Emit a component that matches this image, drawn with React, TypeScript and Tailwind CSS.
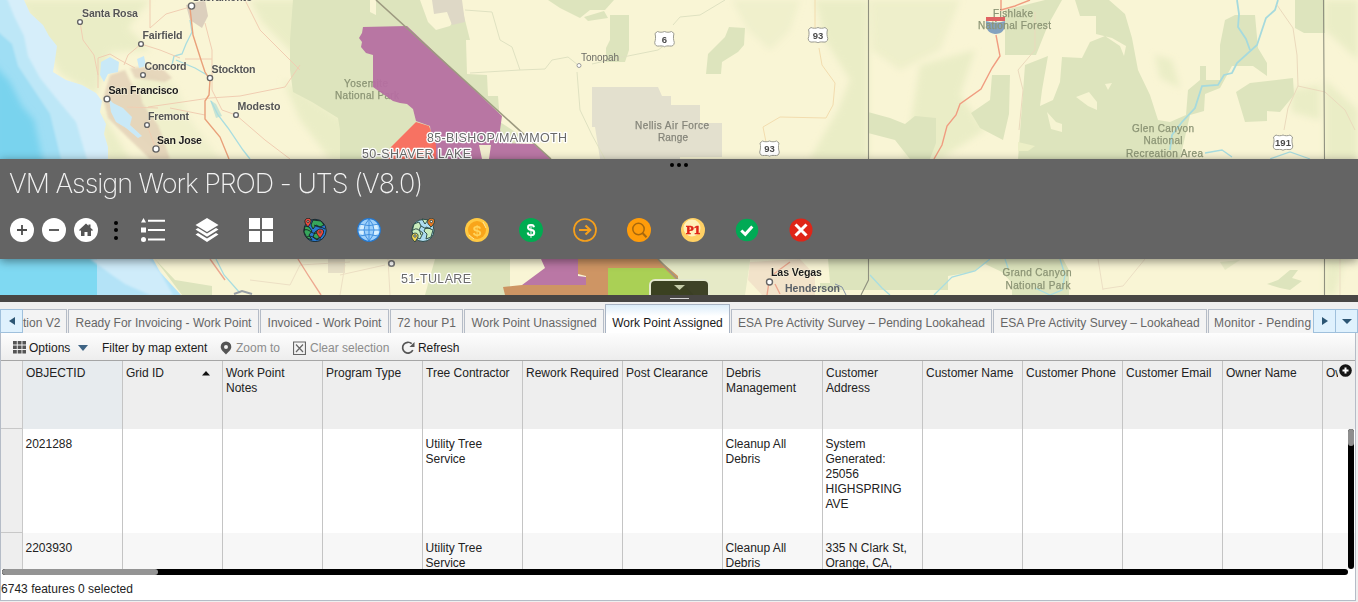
import React from "react";

type Pt = [number, number];

const cities: { x: number; y: number; r: number; t: string; tx: number; ty: number; w: number; c: string }[] = [
  { x: 80, y: 22, r: 2.4, t: "Santa Rosa", tx: 82, ty: 17, w: 56, c: "#555" },
  { x: 141, y: 44, r: 2.4, t: "Fairfield", tx: 142.5, ty: 38.5, w: 40, c: "#555" },
  { x: 143, y: 75, r: 2.4, t: "Concord", tx: 144.5, ty: 69.5, w: 42, c: "#555" },
  { x: 210, y: 78, r: 2.6, t: "Stockton", tx: 211.5, ty: 73, w: 44, c: "#555" },
  { x: 107, y: 99, r: 2.9, t: "San Francisco", tx: 108.5, ty: 93.5, w: 70, c: "#1c1c1c" },
  { x: 236, y: 115, r: 2.4, t: "Modesto", tx: 237.5, ty: 109.5, w: 43, c: "#555" },
  { x: 147, y: 125, r: 2.4, t: "Fremont", tx: 148, ty: 119.5, w: 41, c: "#555" },
  { x: 156, y: 149, r: 3.1, t: "San Jose", tx: 157, ty: 144, w: 45, c: "#1c1c1c" },
  { x: 191.5, y: 6, r: 3.1, t: "Sacramento", tx: 192.5, ty: 1.2, w: 60, c: "#555" },
  { x: 769.5, y: 282, r: 3, t: "Las Vegas", tx: 771, ty: 276, w: 51, c: "#1c1c1c" },
];

const parks: { t: string; x: number; y: number; w: number; c?: string }[] = [
  { t: "Yosemite", x: 344, y: 87, w: 44 },
  { t: "National Park", x: 335, y: 99, w: 64 },
  { t: "Nellis Air Force", x: 635, y: 129, w: 74, c: "#85857a" },
  { t: "Range", x: 658, y: 141, w: 30, c: "#85857a" },
  { t: "Fishlake", x: 993, y: 17, w: 40 },
  { t: "Glen Canyon", x: 1132, y: 132, w: 62 },
  { t: "National", x: 1143.5, y: 144, w: 39 },
  { t: "Recreation Area", x: 1126, y: 156.5, w: 77 },
  { t: "Grand Canyon", x: 1002.5, y: 276, w: 69 },
  { t: "National Park", x: 1005.5, y: 288.5, w: 65 },
];

const zones: { t: string; x: number; y: number; w: number }[] = [
  { t: "85-BISHOP/MAMMOTH", x: 427, y: 142, w: 140 },
  { t: "50-SHAVER LAKE", x: 362, y: 158, w: 109 },
  { t: "51-TULARE", x: 401, y: 283, w: 70 },
];

function Shield({ at, n }: { at: Pt; n: string }) {
  return (
    <g transform={`translate(${at[0]} ${at[1]})`}>
      <path
        d="M-7-7.5C-5-6.500-2-6.500 0-7.500C2-6.500 5-6.500 7-7.500L9.500-5.500C8.500-2 9 1 9.800 3.500C9.500 6.500 8 7.500 5 7C3 6.800 1 7 0 7.800C-1 7-3 6.800-5 7C-8 7.500-9.500 6.500-9.800 3.500C-9 1-8.500-2-9.500-5.500Z"
        fill="#fff"
        stroke="#9a9a90"
        strokeWidth="1"
      />
      <text y="3.6" textAnchor="middle" fontSize="9.5" fontWeight="700" fill="#4a4a4a">
        {n}
      </text>
    </g>
  );
}

function MapCanvas() {
  return (
    <svg width="1358" height="295" viewBox="0 0 1358 295" className="block" fontFamily="'Liberation Sans', Arial, sans-serif">
      <defs>
        <filter id="soft" x="-20%" y="-20%" width="140%" height="140%">
          <feGaussianBlur stdDeviation="3" />
        </filter>
        <filter id="shoal" x="-20%" y="-20%" width="140%" height="140%">
          <feGaussianBlur stdDeviation="1.2" />
        </filter>
      </defs>
      <rect width="1358" height="295" fill="#f9f5d5" />

      {/* farm valley and rolling hills */}
      <g fill="#eaedc6" filter="url(#soft)">
        <path d="M20 0H150L128 28L150 50L110 52L96 95L60 74Z" />
        <path d="M104 105L160 159H220L190 120L175 85L150 70Z" opacity="0.6" />
        <path d="M100 110L130 159H106Z" />
        <path d="M250 0H300V60L280 40L262 22Z" />
        <path d="M283 80L360 130V159H330L300 120Z" />
        <path d="M732 0H800L790 30L770 50L748 30Z" opacity="0.6" />
        <path d="M815 0H868V159H810L838 110L850 80L825 40Z" />
        <path d="M870 0H960L940 50L900 70L872 50Z" opacity="0.7" />
        <path d="M920 65L975 50L960 95L985 130L940 159H905Z" />
        <path d="M1325 0H1358V60L1325 30ZM1325 80L1358 110V159H1325Z" />
        <path d="M1290 90L1320 85V120L1292 112Z" />
        <path d="M1155 55L1172 60L1180 88L1160 78Z" />
        <path d="M1325 259H1345L1335 295H1325Z" />
      </g>

      {/* forests */}
      <g fill="#dde4bd">
        <path d="M293 0H370V12L376 15V0H420L428 22L436 30L450 26L462 8L470 40H466L467 74L487 75L488 96H498L500 122L520 135V159H340V130L338 118L312 102L293 92L290 70L290 40Z" />
        <path d="M548 0H614L605 10H590L580 18L560 8ZM584 17L604 11L608 18L588 21Z" />
        <path d="M610 15H629V50L625 62H606V48L610 40Z" />
        <path d="M725 37L729 27L745 28L744 45L738 52L722 62L721 74H706L708 54Z" />
        <path d="M868 112L890 118L905 124L915 116L936 118V143L930 159H910L895 140L868 133Z" />
        <path d="M992 75H1010L1009 114L1003 140L980 128L971 113L990 100Z" />
        <path d="M1005 10L1045 0H1062L1048 25L1036 55H1005Z" />
        <path d="M1075 0H1109L1125 14L1132 38L1138 70L1150 95L1158 120L1170 122L1186 115L1188 90L1200 80V66H1206V80H1220L1220 45L1225 20L1235 15H1255L1258 48L1267 63L1267 76L1253 66H1232L1220 88L1205 94L1204 111L1190 115L1180 159H1018L1025 65L1048 56L1042 90L1040 106L1053 100L1060 82L1062 57L1082 58L1090 42L1105 36L1120 46L1124 56L1126 46L1112 38L1096 34V16H1080Z" />
        <path d="M1236 92L1250 83L1293 78L1294 95L1280 112L1267 111V121L1245 122Z" />
        <path d="M1295 0H1325V33H1304L1295 28Z" />
        <path d="M1047 112L1056 122L1062 124V132L1051 129Z" fill="#f6f4d2" />
        <path d="M1076 97L1089 92L1097 102V110L1088 106ZM1105 84L1112 83L1108 90Z" fill="#f6f4d2" />
        <path d="M1018 142L1035 146L1028 151H1018Z" fill="#ecefc6" />
        <path d="M435 259H510V295H425Z" />
        <path d="M155 259L175 280L212 286V295H182Z" />
        <path d="M828 259H1063L1069 270V295H1012V283L985 272L950 283V290H820V283H830Z" />
        <path d="M948 276L972 272L985 264L1002 272L1012 283V295H948Z" fill="#f9f5d5" />
        <path d="M1267 284L1278 280L1290 270L1298 270L1292 278L1302 281L1290 290L1280 288Z" />
        <path d="M1220 262L1240 260L1225 270Z" opacity="0.6" />
        <path d="M658 259H750V262L745 295H690Z" fill="#e6eac7" />
      </g>

      {/* restricted ranges and urban areas */}
      <path d="M592 87H658L662 96H671V105H700V123H722V157H680V159H600L595 127H592Z" fill="#e3e0ce" />
      <path d="M432 0H462L465 22L452 25L447 12L434 14Z" fill="#ded8c6" />
      <path d="M186 5L205 0L208 16L202 28L190 20Z" fill="#dccfbd" />
      <g filter="url(#shoal)">
        <path d="M110 75L125 70L132 85L140 100L158 125L170 159H150L120 130L108 118L105 105L103 99ZM130 68L160 66L172 78L165 82L135 78ZM122 82L140 92L145 115L130 104Z" fill="#e2d0b6" opacity="0.8" />
      </g>
      <path d="M750 262L800 259L815 275V295H762L748 280Z" fill="#efdcc4" opacity="0.7" />
      <path d="M328 259H345V273H328Z" fill="#e6dfc7" />

      {/* ocean and bay */}
      <path d="M0 0H24L30 13L43 25L49 36L57 46L55 60L53 72L66 80L82 85L96 93L102 101L100 112L106 124L104 134L108 147V159H0Z" fill="#d6eefa" />
      <g filter="url(#shoal)">
        <path d="M-4 -4H6L14 16L24 36L28 56L40 78L56 98L76 122L88 163H-4Z" fill="#bde7f7" />
        <path d="M-4 30L12 44L18 66L34 90L50 114L62 163H-4Z" fill="#9fdef4" />
      </g>
      <path d="M-6 64L10 82L22 106L34 120L44 165H-6Z" fill="#79d3ee" filter="url(#soft)" />
      <path d="M0 259H97V295H0Z" fill="#7fd9f2" />
      <path d="M97 259H153L160 272L170 283L181 295H97Z" fill="#b4e3f7" />
      <path d="M90 259H150L160 272L173 295H150L125 284L112 275Z" fill="#cfecfa" filter="url(#shoal)" />
      <g fill="#c9e9f7">
        <path d="M101 62L110 57L119 62L118 72L108 74L104 82L100 75Z" />
        <path d="M137 59L144 56L146 66L139 68Z" />
        <path d="M109 99L113 103L123 108L132 117L130 125L142 136L138 138L126 128L116 122L111 112Z" />
        <path d="M210 100L216 104L222 116L216 118Z" fill="#c8e4d4" />
      </g>

      {/* rivers */}
      <g fill="none" stroke="#a9dde0" strokeWidth="1.3">
        <path d="M190 20L192 32L186 44L182 54L174 56L172 65M176 60L195 68L207 75M211 101L218 115L228 128L243 150L250 159" />
        <path d="M1237 0L1239 14L1238 27L1246 39L1250 50M1278 0L1275 10L1266 18L1262 30L1257 45L1237 63L1232 73L1224 75L1218 85L1202 86L1195 108L1182 122L1172 135L1170 150" strokeWidth="1.8" stroke="#a6dadd" />
        <path d="M1205 153L1222 150L1232 157M1270 159L1290 152L1310 159" />
        <path d="M216 259L224 275L240 293M870 275L882 288L890 295M934 295L952 277L975 271L990 259M1060 259L1065 275L1062 290L1050 295L1035 288M1005 259L1008 268" />
      </g>

      {/* roads */}
      <g fill="none" stroke="#f0cdb2" strokeWidth="1">
        <path d="M80 22L83 40L94 55L98 75M141 44L128 55L124 65M141 44L160 50L180 58M150 0V28L166 14L190 7M205 23L212 50V90L222 110L236 115L265 140L290 159M148 107L210 98L240 96L285 87L300 65M245 0L260 30L300 70M170 108L205 115M185 59H212M98 88V58L110 54L120 60L135 68M127 107L158 108" />
        <path d="M147 125L156 149" />
        <path d="M465 10L492 12L500 40L512 47L520 70L545 69L552 60L568 57L578 65M470 73L520 70M592 64L618 58L658 50L665 45M673 25L680 17L700 15L725 0M577 72L580 110L592 135L605 159" stroke="#dfe1c1" />
        <path d="M815 0V30M819 48L822 65L835 83L833 105L826 118L780 117L763 127L766 142" stroke="#f2dcae" />
        <path d="M1019 130L1023 90L1018 70L1035 50V12M1277 5L1293 28L1297 55L1298 86L1288 108L1284 130M1298 86L1325 92L1345 110L1355 130" stroke="#ead9bc" />
        <path d="M1098 259L1103 290M1103 289L1123 286L1145 259M1340 259V295M250 280L290 285L300 265L350 262M345 265L340 295M388 259L390 295M340 275L385 265" stroke="#ecdfc4" />
      </g>
      <g fill="none" strokeWidth="1.4">
        <path d="M190 8L193 35L201 60L205 72L210 80L209 95L205 101V119L220 137L229 159" stroke="#e9a07a" />
        <path d="M298 259L308 275L321 295M210 259L225 280" stroke="#eda890" />
        <path d="M1001 0V10L1015 6L1030 0M996 35L1000 56L992 68L981 89L960 104L956 115L947 126L942 145L934 159" stroke="#f09c80" />
        <path d="M769 282L767 295M771 276L790 262M775 284L780 294" stroke="#eda890" />
      </g>
      <path d="M835 284L842 287L846 295" fill="none" stroke="#8491a5" />
      <path d="M234 294L242 291L252 294" fill="none" stroke="#9aa0a6" strokeWidth="2" />

      {/* labels beneath the territories */}
      {parks.map((p) => (
        <text key={p.t + p.y} x={p.x} y={p.y} fontSize="10" textLength={p.w} fill={p.c ?? "#8b9475"} stroke={p.c ?? "#8b9475"} strokeWidth="0.25">
          {p.t}
        </text>
      ))}

      {/* service territories */}
      <g fillOpacity="0.94">
        <path d="M363 27L407 26L502 116L500 130L504 143L534 144L551 159H434L430 126L416 121L413 109L407 104L400 103L393 101L380 92L373 87V55L366 53L361 47L362 42L359 38L362 33Z" fill="#b66ea2" />
        <path d="M391 147L416 122L429 126L436 145V159H385Z" fill="#f96a5c" />
        <path d="M479 145H491L489 159H482Z" fill="#f0ecce" fillOpacity="1" />
        <path d="M541 259H578V276L586 277V285H522L545 268Z" fill="#b66ea2" />
        <path d="M578 259H658L678 276V295H505L503 287L522 285H586V276L578 274Z" fill="#cb8e5c" />
        <path d="M608 268H664L692 295H608Z" fill="#aad055" fillOpacity="1" />
      </g>
      <path d="M376 0L551 159M658 259L693 295" fill="none" stroke="#9d9a80" strokeWidth="1.6" />
      <path d="M868.5 0V280L861 295M1323.5 0L1324.5 159V295" fill="none" stroke="#8f907f" strokeWidth="1.1" />

      <text x="785" y="291.5" fontSize="10.5" fontWeight="700" textLength="55" fill="#5a6068">
        Henderson
      </text>
      {cities.map((c) => (
        <g key={c.t}>
          <circle cx={c.x} cy={c.y} r={c.r} fill="#fff" stroke="#666" strokeWidth="1.4" />
          <text x={c.tx} y={c.ty} fontSize="10.6" fontWeight="700" textLength={c.w} fill={c.c} stroke="#fbf8e2" strokeWidth="1.2" strokeOpacity="0.7" paintOrder="stroke">
            {c.t}
          </text>
        </g>
      ))}
      <circle cx="391.5" cy="263.5" r="2.8" fill="#fff" stroke="#777" strokeWidth="1.6" />
      <circle cx="579" cy="65.5" r="2" fill="#fff" stroke="#999" />
      <text x="581" y="60.5" fontSize="10" textLength="38" fill="#6c6c66">
        Tonopah
      </text>
      <Shield at={[664.5, 39]} n="6" />
      <Shield at={[818, 35]} n="93" />
      <Shield at={[769.5, 148.5]} n="93" />
      <Shield at={[1283, 142.5]} n="191" />
      <path d="M986 21Q995 24 1005 21Q1006 34 995 34Q985 33 986 21Z" fill="#6f93bb" opacity="0.85" />
      <path d="M986 17H1005V21H986Z" fill="#e06262" />
      <text x="978" y="29" fontSize="10" textLength="73" fill="#8b9475" stroke="#8b9475" strokeWidth="0.25">
        National Forest
      </text>
      {zones.map((z) => (
        <text key={z.t} x={z.x} y={z.y} fontSize="12.5" textLength={z.w} fill="#6a6a6a" stroke="#fff" strokeWidth="2.6" strokeLinejoin="round" paintOrder="stroke">
          {z.t}
        </text>
      ))}
    </svg>
  );
}

const tools: { id: string; art: React.ReactNode }[] = [
  {
    id: "Legend",
    art: (
      <g fill="#fff">
        <path d="M2.5 0L5 4.5H0ZM0 9.5H5V14.5H0ZM7 1.8H24V3.8H7ZM7 11H24V13H7ZM7 20.5H24V22.5H7Z" />
        <circle cx="2.5" cy="21.5" r="2.5" />
      </g>
    ),
  },
  {
    id: "Layers",
    art: (
      <g fill="#fff">
        <path d="M12 0L23.5 7L12 14L.5 7Z" />
        <path d="M.5 11.5L3 10L12 15.4L21 10L23.5 11.5L12 18.8Z" />
        <path d="M.5 16.5L3 15L12 20.4L21 15L23.5 16.5L12 24Z" />
      </g>
    ),
  },
  { id: "Basemaps", art: <path fill="#fff" d="M0 0H11V11H0ZM13 0H24V11H13ZM0 13H11V24H0ZM13 13H24V24H13Z" /> },
  {
    id: "Globe pins",
    art: (
      <g stroke="#17231f" strokeWidth="0.9">
        <circle cx="12" cy="12.5" r="11.2" fill="#2978cf" />
        <path d="M2 8L6 9L9 13L6 17L9 22L4 20L1 14ZM10 2L18 3L21 7L17 9L13 7L10 11L8 7ZM12 14L15 12L18 17L14 22L10 19Z" fill="#37a65b" />
        <path d="M1 12C7 10 8 17 14 15M11 7C15 10 18 8 22 11M4 19C9 16 11 22 18 21" fill="none" />
        <path d="M5 9C2.5 6 1.5 4.500 2 2.500C3-.5 7.500-.5 8 2.500C8.500 4.500 7 6 5 9ZM17 20C14 16 13 15 14 13C15 10.500 20 10.500 20.500 13C21 15 19.500 17 17 20Z" fill="#ec493d" />
        <circle cx="5" cy="3.500" r="1" fill="#fff" />
        <circle cx="17" cy="14" r="1" fill="#fff" />
      </g>
    ),
  },
  {
    id: "Globe",
    art: (
      <g>
        <circle cx="12" cy="12" r="11.3" fill="#9dd0fb" />
        <path d="M4 6H9L6 17L2 15ZM16 6H20L22 15L17 18Z" fill="#d7efff" />
        <path d="M12 1V23M1 12H23M3 6.200Q12 9 21 6.200M3 18Q12 15 21 18M12 1Q2 12 12 23M12 1Q22 12 12 23" fill="none" stroke="#3f8fe0" strokeWidth="1" />
        <circle cx="12" cy="12" r="11.3" fill="none" stroke="#2478d0" strokeWidth="1.2" />
      </g>
    ),
  },
  {
    id: "World route",
    art: (
      <g stroke="#23413e" strokeWidth="0.9">
        <circle cx="12" cy="12.500" r="11" fill="#addcf0" />
        <path d="M3 6L8 4L10 8L8 12L12 15L9 21L5 19L1 14ZM15 9L22 12L20 19L15 21L16 16L13 13ZM11 1L17 2L14 6Z" fill="#c9edbd" />
        <path d="M2 12Q8 8 10 17M10 8Q14 12 20 10" fill="none" />
        <path d="M20 9C17 6 16 5 17 2.500C18-.500 23-.5 23.500 2.500C24 5 22 7 20 9Z" fill="#e87924" />
        <path d="M4 24C1 21 0 19 1 17C2 14.500 6.500 14.500 7 17C7.500 19 6 21 4 24Z" fill="#f3d452" />
        <circle cx="20.300" cy="3.500" r="1.200" fill="#fff" />
        <circle cx="4" cy="18" r="1.200" fill="#fff" />
      </g>
    ),
  },
  {
    id: "Coin",
    art: (
      <g>
        <circle cx="12" cy="12" r="12" fill="#ffc943" />
        <circle cx="12" cy="12" r="9" fill="#f9a51a" />
        <path d="M18 4L21 10M4 17L9 21" stroke="#ffe49a" />
        <text x="12" y="17.500" fontSize="15.500" fontWeight="700" textAnchor="middle" fill="#ffd45d">$</text>
      </g>
    ),
  },
  {
    id: "Dollar",
    art: (
      <g>
        <circle cx="12" cy="12" r="12" fill="#00ac51" />
        <text x="12" y="17.500" fontSize="16" fontWeight="700" textAnchor="middle" fill="#fff">$</text>
      </g>
    ),
  },
  {
    id: "Forward",
    art: (
      <g fill="none" stroke="#f7a01b">
        <circle cx="12" cy="12" r="11" strokeWidth="1.700" />
        <path d="M6 12H17M12.500 7.500L17.200 12L12.500 16.500" strokeWidth="2.200" />
      </g>
    ),
  },
  {
    id: "Search",
    art: (
      <g fill="none">
        <circle cx="12" cy="12" r="12" fill="#ff9c0a" />
        <g stroke="#a8680d" strokeWidth="1.500">
          <circle cx="11.500" cy="11" r="5.700" />
          <path d="M15.500 15L19.500 19.200" strokeWidth="2" />
        </g>
      </g>
    ),
  },
  {
    id: "Priority one",
    art: (
      <g>
        <circle cx="12" cy="12" r="12" fill="#ffd064" />
        <circle cx="11" cy="10" r="8.500" fill="#fff0b8" />
        <text x="12.200" y="16" fontSize="10.500" fontWeight="700" textAnchor="middle" textLength="15" fill="#df2418" stroke="#df2418" strokeWidth="0.500" fontFamily="'DejaVu Serif', serif">P1</text>
      </g>
    ),
  },
  {
    id: "Approve",
    art: (
      <g>
        <circle cx="12" cy="12" r="11.200" fill="#00aa55" />
        <path d="M6.300 12.500L10.300 16.300L17.300 8.500" fill="none" stroke="#fff" strokeWidth="3" />
      </g>
    ),
  },
  {
    id: "Reject",
    art: (
      <g>
        <circle cx="12" cy="12" r="11.500" fill="#df2518" />
        <path d="M6.500 6.500L17.500 17.500M17.500 6.500L6.500 17.500" stroke="#fff" strokeWidth="3" />
      </g>
    ),
  },
];

function Header() {
  return (
    <header className="absolute inset-x-0 top-[159px] flex h-[100px] flex-col bg-[#646464] shadow-[0_2px_9px_rgba(0,0,0,0.45)]">
      <div className="absolute top-[4px] left-[670px] flex gap-[3px]">
        <i className="size-1 rounded-full bg-black" />
        <i className="size-1 rounded-full bg-black" />
        <i className="size-1 rounded-full bg-black" />
      </div>
      <h1 className="h-[50px] pl-[9px] font-[Inter] text-[27px] leading-[50px] font-extralight tracking-[-1.04px] whitespace-nowrap text-[#f2f2f2]">
        VM Assign Work PROD - UTS (V8.0)
      </h1>
      <div className="flex h-[42px] items-center pl-[10px]">
        <div className="flex gap-2">
          <svg width="24" height="24" aria-label="Zoom in">
            <circle cx="12" cy="12" r="12" fill="#fff" />
            <path d="M7 12H17M12 7V17" stroke="#4c4c4c" strokeWidth="1.800" />
          </svg>
          <svg width="24" height="24" aria-label="Zoom out">
            <circle cx="12" cy="12" r="12" fill="#fff" />
            <path d="M7 12H17" stroke="#4c4c4c" strokeWidth="1.800" />
          </svg>
          <svg width="24" height="24" aria-label="Home">
            <circle cx="12" cy="12" r="12" fill="#fff" />
            <path d="M12 5.500L14.500 7.800V6.500H16.500V9.700L19 12L18 13L17 12.200V18H13.500V14H10.500V18H7V12.200L6 13L5 12Z" fill="#555" />
          </svg>
        </div>
        <div className="ml-4 flex w-1 flex-col gap-[3.500px]">
          <i className="size-1 rounded-full bg-black" />
          <i className="size-1 rounded-full bg-black" />
          <i className="size-1 rounded-full bg-black" />
        </div>
        <div className="ml-[23px] flex gap-[30px]">
          {tools.map((t) => (
            <svg key={t.id} width="24" height="24" viewBox="0 0 24 24" aria-label={t.id} fontFamily="'Liberation Sans', sans-serif">
              {t.art}
            </svg>
          ))}
        </div>
      </div>
    </header>
  );
}

const tabs: { t: string; w: string; on?: boolean }[] = [
  { t: "Ready For Invoicing - Work Point", w: "w-[191px]" },
  { t: "Invoiced - Work Point", w: "w-[129px]" },
  { t: "72 hour P1", w: "w-[73px]" },
  { t: "Work Point Unassigned", w: "w-[140px]" },
  { t: "Work Point Assigned", w: "w-[125px]", on: true },
  { t: "ESA Pre Activity Survey – Pending Lookahead", w: "w-[261px]" },
  { t: "ESA Pre Activity Survey – Lookahead", w: "w-[214px]" },
];

function Tabs() {
  const idle = "h-6 border border-b-0 border-[#b5bcc7] bg-[#f3f3f3] text-[#666] leading-[26px]";
  return (
    <nav className="flex h-[31px] items-end overflow-hidden bg-[#efefef] whitespace-nowrap">
      <div className="flex h-6 w-[23px] shrink-0 items-center justify-center border border-[#9fc0dc] bg-[#dff1fd]">
        <svg width="6" height="8"><path d="M6 0V8L0 4Z" fill="#2c5674" /></svg>
      </div>
      <div className={`${idle} mr-px w-[44px] shrink-0 border-l-0`}>tion V2</div>
      <div className="flex items-end gap-px">
        {tabs.map((t) => (
          <div
            key={t.t}
            className={`${t.w} shrink-0 text-center ${
              t.on
                ? "h-[29px] border border-b-0 border-[#a9b4c4] bg-linear-to-b from-[#dcedfa] to-white to-40% pt-[5px] leading-[26px] text-[#1a1a1a]"
                : idle
            }`}
          >
            {t.t}
          </div>
        ))}
      </div>
      <div className={`${idle} ml-px w-[105px] shrink-0 overflow-hidden border-r-0 pl-[5px] tracking-[0.15px]`}>Monitor - Pending</div>
      <div className="flex h-6 w-[23px] shrink-0 items-center justify-center border border-[#9fc0dc] bg-[#dff1fd]">
        <svg width="6" height="8"><path d="M0 0V8L6 4Z" fill="#2c5674" /></svg>
      </div>
      <div className="flex h-6 w-[22px] shrink-0 items-center justify-center border border-l-0 border-[#9fc0dc] bg-[#dff1fd]">
        <svg width="10" height="5"><path d="M0 0H10L5 5Z" fill="#2c5674" /></svg>
      </div>
    </nav>
  );
}

function Toolbar() {
  return (
    <div className="flex h-7 items-center border-b border-[#a5a5a5] bg-linear-to-b from-[#fdfdfd] to-[#ededed] pt-[2px] pl-3 text-[#1a1a1a]">
      <svg width="13" height="13"><path fill="#555" d="M0 0H3.800V3.500H0ZM4.700 0H8.500V3.500H4.700ZM9.400 0H13.200V3.500H9.400ZM0 4.500H3.800V8H0ZM4.700 4.500H8.500V8H4.700ZM9.400 4.500H13.200V8H9.400ZM0 9H3.800V12.500H0ZM4.700 9H8.500V12.500H4.700ZM9.400 9H13.200V12.500H9.400Z" /></svg>
      <span className="ml-[3px] w-[44px] whitespace-nowrap">Options</span>
      <svg className="ml-[5px]" width="10" height="6"><path d="M0 0H10L5 6Z" fill="#3f6484" /></svg>
      <span className="ml-[14px] w-[108px] whitespace-nowrap">Filter by map extent</span>
      <svg className="ml-[10px]" width="12" height="14"><path fillRule="evenodd" fill="#555" d="M6 .5A5.300 5.300 0 0 1 11.300 6C11.300 9 7.500 11.500 6 13.500C4.500 11.500 .7 9 .7 6A5.300 5.300 0 0 1 6 .5ZM6 4A2 2 0 1 0 6 8A2 2 0 0 0 6 4Z" /></svg>
      <span className="ml-1 w-[47px] whitespace-nowrap text-[#8c8c8c]">Zoom to</span>
      <svg className="ml-[10px]" width="13" height="14" fill="none" stroke="#666"><path d="M.5 1H12.500V13.500H.5ZM3 3.500L10 11M10 3.500L3 11" strokeWidth="1.200" /></svg>
      <span className="ml-1 w-[80px] whitespace-nowrap text-[#8c8c8c]">Clear selection</span>
      <svg className="ml-[11px]" width="14" height="14"><path d="M11.800 9.200A5.400 5.400 0 1 1 10.700 2.700" fill="none" stroke="#555" strokeWidth="1.700" /><path d="M13.500 1V6H8.500Z" fill="#555" /></svg>
      <span className="ml-[3px] tracking-[-0.1px]">Refresh</span>
    </div>
  );
}

const headers = [
  "OBJECTID",
  "Grid ID",
  "Work Point Notes",
  "Program Type",
  "Tree Contractor",
  "Rework Required",
  "Post Clearance",
  "Debris Management",
  "Customer Address",
  "Customer Name",
  "Customer Phone",
  "Customer Email",
  "Owner Name",
];

const rows: string[][] = [
  ["2021288", "", "", "", "Utility Tree Service", "", "", "Cleanup All Debris", "System Generated: 25056 HIGHSPRING AVE", "", "", "", ""],
  ["2203930", "", "", "", "Utility Tree Service", "", "", "Cleanup All Debris", "335 N Clark St, Orange, CA,", "", "", "", ""],
];

function Grid() {
  return (
    <div className="relative h-[208px] overflow-hidden leading-[15px] text-[#222]">
      <div className="flex h-[68px] bg-[#eeeeee]">
        <div className="w-[22px] shrink-0 border-r border-b border-[#c8c8c8]" />
        {headers.map((h, i) => (
          <div key={h} className={`flex w-[100px] shrink-0 justify-between border-r border-[#c4c4c4] pt-[5px] pl-[3px] ${i === 0 ? "bg-[#e7ebee]" : ""}`}>
            <span className={i === 5 || i === 10 ? "whitespace-nowrap" : i === 2 ? "w-[65px]" : ""}>{h}</span>
            {i === 1 && <svg className="mt-[5px] mr-[12px]" width="8" height="5"><path d="M0 4.500L4 0L8 4.500Z" fill="#111" /></svg>}
          </div>
        ))}
        <div className="w-[15px] overflow-hidden pt-[5px] pl-[3px] whitespace-nowrap">Ow</div>
      </div>
      {rows.map((r, n) => (
        <div key={r[0]} className={`flex h-[104px] ${n ? "bg-[#f7f7f7]" : "bg-white"}`}>
          <div className="w-[22px] shrink-0 border-r border-b border-[#c8c8c8] bg-[#eeeeee]" />
          {r.map((c, i) => (
            <div key={i} className="w-[100px] shrink-0 border-r border-[#c4c4c4] pt-[8px] pr-[10px] pl-[2.500px]">
              {c}
            </div>
          ))}
        </div>
      ))}
      <svg className="absolute top-[3px] right-[3px]" width="13" height="13">
        <circle cx="6.500" cy="6.500" r="6.300" fill="#151515" />
        <path d="M3.500 6.500H9.500M6.500 3.500V9.500" stroke="#fff" strokeWidth="2" />
      </svg>
      <div className="absolute top-[68px] right-px h-[140px] w-[6px] rounded-full bg-black">
        <div className="h-[17px] rounded-full bg-[#8e8e8e]" />
      </div>
    </div>
  );
}

export default function App() {
  return (
    <div className="flex h-[602px] w-[1358px] flex-col overflow-hidden bg-[#efefef] font-['Liberation_Sans',Arial,sans-serif] text-[12px]">
      <section className="relative h-[295px] shrink-0 overflow-hidden">
        <MapCanvas />
        <Header />
        <div className="absolute top-[279px] left-[649px] flex h-[17px] w-[61px] justify-center rounded-t-md border-2 border-b-0 border-[#e4e8cf] bg-[#35391f]/95 pt-[4px]">
          <svg width="11" height="5"><path d="M0 0H11L5.500 5Z" fill="#c5cba8" /></svg>
        </div>
      </section>
      <div className="flex h-[7px] shrink-0 justify-center bg-[#484644] pt-[3px]">
        <i className="h-px w-[19px] bg-[#d5d5d5]" />
      </div>
      <Tabs />
      <div className="flex h-[268px] w-[1356px] flex-col border border-t-0 border-[#b5bcc7] bg-white">
        <Toolbar />
        <Grid />
        <div className="ml-px h-[6px] w-[1346px] shrink-0 overflow-hidden rounded-full bg-black">
          <div className="h-full w-[156px] rounded-full bg-[#949494]" />
        </div>
        <div className="pt-[7px] leading-[15px] tracking-[0.02px] text-[#222]">6743 features 0 selected</div>
      </div>
    </div>
  );
}
